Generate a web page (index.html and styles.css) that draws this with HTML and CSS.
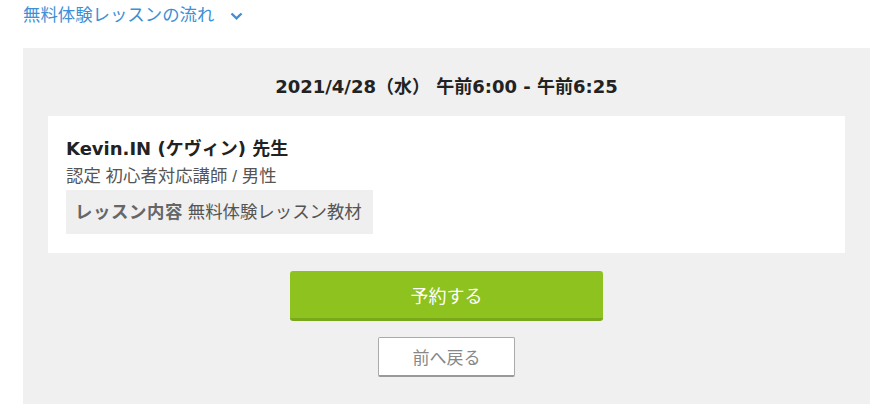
FILE: index.html
```html
<!DOCTYPE html>
<html lang="ja">
<head>
<meta charset="utf-8">
<link rel="stylesheet" href="styles.css">
</head>
<body>
<div class="flow">
  <a class="flow-link">無料体験レッスンの流れ</a>
  <svg class="chev" width="13" height="8" viewBox="0 0 13 8"><path d="M1.5 1.5 L6.5 6.3 L11.5 1.5" fill="none" stroke="#3d8fd6" stroke-width="2.4"/></svg>
</div>
<div class="panel">
  <div class="date">2021/4/28（水） 午前6:00 - 午前6:25</div>
  <div class="card">
    <div class="name">Kevin.IN (ケヴィン) 先生</div>
    <div class="sub">認定 初心者対応講師 / 男性</div>
    <div class="tag"><span class="tag-label">レッスン内容</span> 無料体験レッスン教材</div>
  </div>
  <div class="actions">
    <button class="btn-primary">予約する</button>
    <button class="btn-back">前へ戻る</button>
  </div>
</div>
</body>
</html>
```
FILE: styles.css
```css
html, body {
  margin: 0;
  padding: 0;
  background: #fff;
  font-family: "Liberation Sans", "Noto Sans CJK JP", sans-serif;
}
.flow {
  height: 48px;
  padding-left: 23px;
  display: flex;
  align-items: flex-start;
  box-sizing: border-box;
  padding-top: 3px;
}
.flow-link {
  color: #3d8fd6;
  font-size: 17.4px;
  line-height: 24px;
}
.chev {
  margin-left: 16px;
  margin-top: 9px;
}
.panel {
  margin: 0 16px 0 23px;
  background: #f0f0f0;
  padding-bottom: 40px;
}
.date {
  text-align: center;
  font-family: "DejaVu Sans", "Noto Sans CJK JP", sans-serif;
  font-weight: bold;
  font-size: 18px;
  line-height: 22px;
  color: #222;
  padding-top: 28px;
  margin-bottom: 18px;
}
.card {
  margin: 0 25px;
  background: #fff;
  padding: 19px 18px 19px 18px;
}
.name {
  font-family: "DejaVu Sans", "Noto Sans CJK JP", sans-serif;
  font-size: 18px;
  font-weight: bold;
  color: #222;
  line-height: 28px;
}
.sub {
  font-size: 17.4px;
  color: #555;
  line-height: 27px;
}
.tag {
  display: inline-block;
  background: #efefef;
  font-size: 17.4px;
  line-height: 44px;
  padding: 0 11px 0 9px;
  color: #555;
}
.tag-label {
  font-weight: bold;
  color: #666;
  letter-spacing: 0.6px;
}
.actions {
  display: flex;
  flex-direction: column;
  align-items: center;
  padding-top: 18px;
}
.btn-primary {
  width: 313px;
  height: 50px;
  background: #8dc21f;
  border: none;
  border-bottom: 3px solid #79a91a;
  border-radius: 3px;
  color: #fff;
  font-family: inherit;
  font-size: 18px;
  padding: 0;
}
.btn-back {
  margin-top: 16px;
  width: 137px;
  height: 40px;
  background: #fff;
  border: 1px solid #aaa;
  border-bottom: 2px solid #999;
  border-radius: 2px;
  color: #888;
  font-family: inherit;
  font-size: 17px;
  padding: 0;
}
```
